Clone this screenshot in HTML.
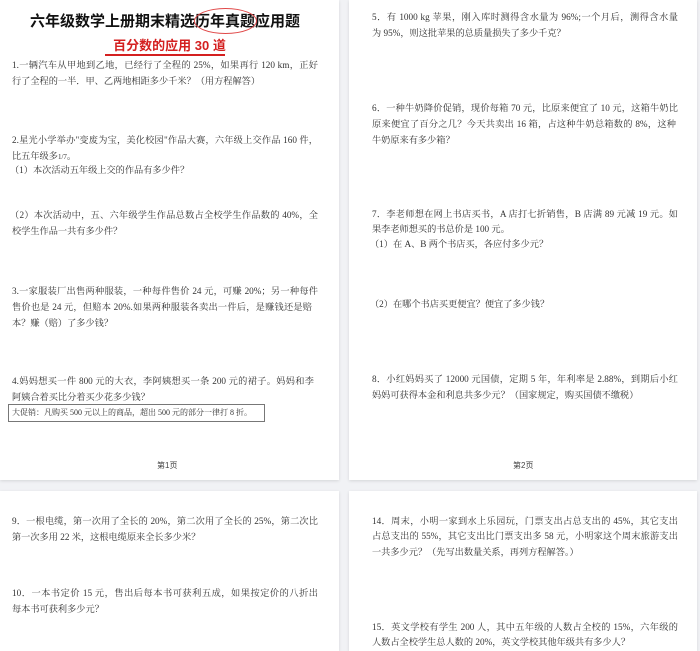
<!DOCTYPE html>
<html><head><meta charset="utf-8"><style>
*{margin:0;padding:0;box-sizing:border-box}
body{width:700px;height:641px;background:#f1f2f5;position:relative;overflow:hidden;font-family:"Liberation Serif","Noto Serif CJK SC",serif;color:#333}
.pg{position:absolute;background:#fff;box-shadow:0 1px 3px rgba(0,0,0,.12)}
.l{position:absolute;font-size:9.2px;line-height:14px;white-space:nowrap}
.j{text-align:justify;text-align-last:justify;white-space:normal;overflow:hidden;height:14px}
.ft{position:absolute;font-size:8px;font-family:"Liberation Sans","Noto Sans CJK SC",sans-serif;color:#444}
</style></head><body>
<div class="pg" style="left:0;top:0;width:339px;height:480px"></div>
<div class="pg" style="left:349px;top:0;width:348px;height:480px"></div>
<div class="pg" style="left:0;top:491px;width:339px;height:160px"></div>
<div class="pg" style="left:349px;top:491px;width:348px;height:160px"></div>

<div style="position:absolute;left:30px;top:11px;white-space:nowrap;font-family:'Liberation Sans','Noto Sans CJK SC',sans-serif;font-weight:bold;font-size:15px;color:#111;line-height:22px">六年级数学上册期末精选历年真题应用题</div>
<div style="position:absolute;left:194px;top:8px;width:63px;height:26px;border:1px solid #e04848;border-radius:50%"></div>
<div style="position:absolute;left:0;top:37px;width:339px;text-align:center;font-family:'Liberation Sans','Noto Sans CJK SC',sans-serif;font-weight:bold;font-size:13px;color:#d42020;line-height:17px">百分数的应用 30 道</div>
<div style="position:absolute;left:105px;top:54px;width:120px;height:2px;background:#d42020"></div>

<div class="l j" style="left:12px;top:58px;width:306px">1.一辆汽车从甲地到乙地，已经行了全程的 25%，如果再行 120 km，正好</div>
<div class="l" style="left:12px;top:74px">行了全程的一半．甲、乙两地相距多少千米？（用方程解答）</div>
<div class="l j" style="left:12px;top:133px;width:306px">2.星光小学举办"变废为宝，美化校园"作品大赛，六年级上交作品 160 件，</div>
<div class="l" style="left:12px;top:149px">比五年级多<span style="font-size:7px">1/7</span>。</div>
<div class="l" style="left:10px;top:163px">（1）本次活动五年级上交的作品有多少件？</div>
<div class="l j" style="left:10px;top:208px;width:308px">（2）本次活动中，五、六年级学生作品总数占全校学生作品数的 40%，全</div>
<div class="l" style="left:12px;top:224px">校学生作品一共有多少件？</div>
<div class="l j" style="left:12px;top:284px;width:306px">3.一家服装厂出售两种服装，一种每件售价 24 元，可赚 20%；另一种每件</div>
<div class="l j" style="left:12px;top:300px;width:300px">售价也是 24 元，但赔本 20%.如果两种服装各卖出一件后，是赚钱还是赔</div>
<div class="l" style="left:12px;top:316px">本？赚（赔）了多少钱？</div>
<div class="l j" style="left:12px;top:374px;width:302px">4.妈妈想买一件 800 元的大衣，李阿姨想买一条 200 元的裙子。妈妈和李</div>
<div class="l" style="left:12px;top:390px">阿姨合着买比分着买少花多少钱？</div>
<div style="position:absolute;left:8px;top:404px;width:257px;height:18px;border:1px solid #777"></div>
<div class="l" style="left:12px;top:406px;font-size:8px">大促销：凡购买 500 元以上的商品，超出 500 元的部分一律打 8 折。</div>
<div class="ft" style="left:157px;top:460px">第1页</div>

<div class="l j" style="left:372px;top:10px;width:306px">5．有 1000 kg 苹果，刚入库时测得含水量为 96%;一个月后，测得含水量</div>
<div class="l" style="left:372px;top:26px">为 95%，则这批苹果的总质量损失了多少千克？</div>
<div class="l j" style="left:372px;top:101px;width:306px">6．一种牛奶降价促销，现价每箱 70 元，比原来便宜了 10 元，这箱牛奶比</div>
<div class="l j" style="left:372px;top:117px;width:304px">原来便宜了百分之几？今天共卖出 16 箱，占这种牛奶总箱数的 8%，这种</div>
<div class="l" style="left:372px;top:133px">牛奶原来有多少箱？</div>
<div class="l j" style="left:372px;top:207px;width:306px">7．李老师想在网上书店买书，A 店打七折销售，B 店满 89 元减 19 元。如</div>
<div class="l" style="left:372px;top:222px">果李老师想买的书总价是 100 元。</div>
<div class="l" style="left:370px;top:237px">（1）在 A、B 两个书店买，各应付多少元？</div>
<div class="l" style="left:370px;top:297px">（2）在哪个书店买更便宜？便宜了多少钱？</div>
<div class="l j" style="left:372px;top:372px;width:306px">8．小红妈妈买了 12000 元国债，定期 5 年，年利率是 2.88%，到期后小红</div>
<div class="l" style="left:372px;top:388px">妈妈可获得本金和利息共多少元？（国家规定，购买国债不缴税）</div>
<div class="ft" style="left:513px;top:460px">第2页</div>

<div class="l j" style="left:12px;top:514px;width:306px">9．一根电缆，第一次用了全长的 20%，第二次用了全长的 25%，第二次比</div>
<div class="l" style="left:12px;top:530px">第一次多用 22 米，这根电缆原来全长多少米？</div>
<div class="l j" style="left:12px;top:586px;width:306px">10．一本书定价 15 元，售出后每本书可获利五成，如果按定价的八折出售，</div>
<div class="l" style="left:12px;top:602px">每本书可获利多少元？</div>
<div class="l j" style="left:372px;top:514px;width:306px">14．周末，小明一家到水上乐园玩，门票支出占总支出的 45%，其它支出</div>
<div class="l j" style="left:372px;top:529px;width:306px">占总支出的 55%，其它支出比门票支出多 58 元，小明家这个周末旅游支出</div>
<div class="l" style="left:372px;top:545px">一共多少元？（先写出数量关系，再列方程解答。）</div>
<div class="l j" style="left:372px;top:620px;width:306px">15．英文学校有学生 200 人，其中五年级的人数占全校的 15%，六年级的</div>
<div class="l" style="left:372px;top:635px">人数占全校学生总人数的 20%，英文学校其他年级共有多少人？</div>
</body></html>
